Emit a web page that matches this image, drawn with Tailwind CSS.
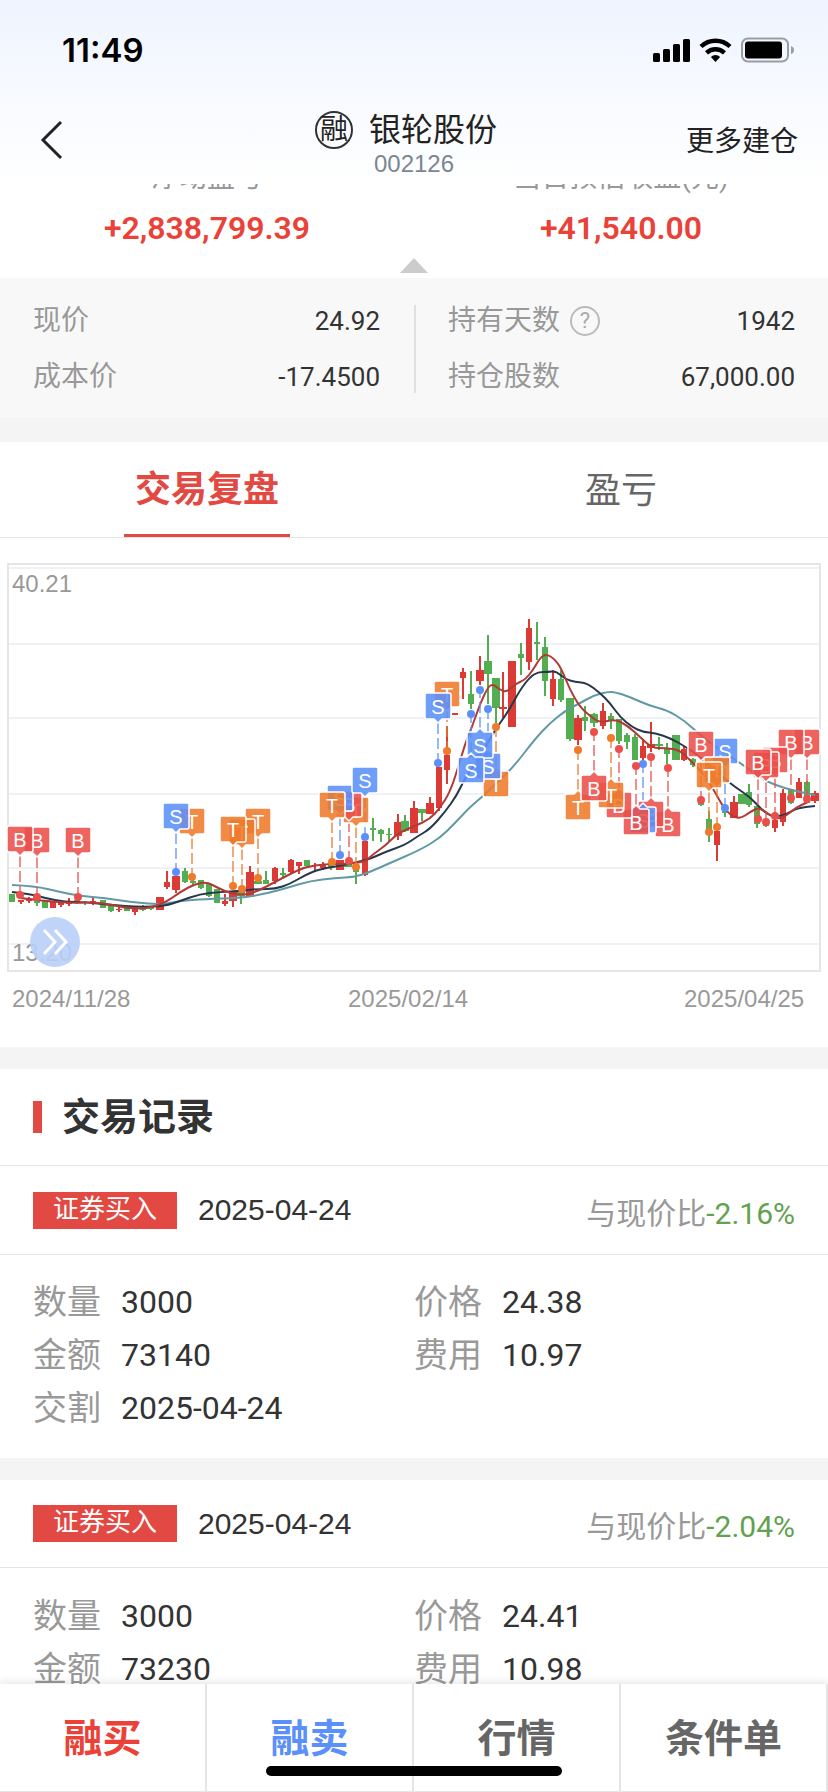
<!DOCTYPE html>
<html lang="zh-CN">
  <head>
    <meta charset="UTF-8">
    <meta name="viewport" content="width=device-width, initial-scale=1">
    <title>银轮股份 002126</title>
    <script src="https://cdn.jsdelivr.net/npm/@tailwindcss/browser@4"></script>
  </head>
  <body class="flex h-screen flex-col overflow-hidden bg-white font-[Roboto,'Noto_Sans_CJK_SC',sans-serif] text-[#333]">

    <header class="z-10 h-[184px] shrink-0 bg-linear-to-b from-[#eff4ff] to-white">
      <div class="flex h-[100px] items-center justify-between pr-[34px] pl-[62px]">
        <span class="font-[Inter,sans-serif] text-[33px] leading-8 font-semibold text-black">11:49</span>
        <svg class="h-[26px] w-[142px]" viewBox="0 0 142 26">
          <rect x="1" y="16" width="7" height="9" rx="1.5"/>
          <rect x="11" y="12" width="7" height="13" rx="1.5"/>
          <rect x="21" y="7" width="7" height="18" rx="1.5"/>
          <rect x="31" y="2" width="7" height="23" rx="1.5"/>
          <g fill="none" stroke="#000" stroke-width="4.4">
            <path d="M49 9.500A21 21 0 0 1 78 9.500"/>
            <path d="M54.500 15.800A13 13 0 0 1 72.500 15.800"/>
          </g>
          <path d="M63.500 25l-4.600-5a6.500 6.500 0 0 1 9.200 0z"/>
          <rect x="90" y="1.500" width="46" height="23" rx="6" fill="none" stroke="#9a9da3" stroke-width="2"/>
          <rect x="93" y="4.500" width="37" height="17" rx="3"/>
          <path d="M139 9q3 1 3 4t-3 4z" fill="#9a9da3"/>
        </svg>
      </div>
      <div class="grid grid-cols-[1fr_auto_1fr] items-center px-[30px]">
        <button class="flex h-20 w-12 items-center pl-[10px]" aria-label="返回">
          <svg class="h-10 w-[24px]" viewBox="0 0 24 40" fill="none" stroke="#222" stroke-width="3"><path d="M21 2L3 20l18 18"/></svg>
        </button>
        <div class="flex flex-col items-center pt-2">
          <h1 class="flex items-center gap-4 pr-4 text-[32px] leading-10 font-normal text-[#222]">
            <span class="flex size-[38px] items-center justify-center rounded-full border-2 border-[#333] text-[28px] leading-none">融</span>银轮股份
          </h1>
          <p class="font-['Liberation_Sans',sans-serif] text-2xl leading-7 text-[#7b8693]">002126</p>
        </div>
        <a href="#" class="justify-self-end pt-1 text-[28px] text-[#222]">更多建仓</a>
      </div>
    </header>

    <main class="min-h-0 flex-1 overflow-y-auto [scrollbar-width:none]">
      <section class="-mt-5 grid h-[114px] grid-cols-2 text-center">
        <div>
          <p class="text-[28px] leading-7 text-[#999]">浮动盈亏</p>
          <p class="mt-4 text-[32px] leading-10 font-semibold text-[#ea4238]">+2,838,799.39</p>
        </div>
        <div>
          <p class="text-[28px] leading-7 text-[#999]">当日预估收益(元)</p>
          <p class="mt-4 text-[32px] leading-10 font-semibold text-[#ea4238]">+41,540.00</p>
        </div>
        <svg class="col-span-2 mx-auto mt-1 h-[15px] w-7" viewBox="0 0 28 15" fill="#ccc"><path d="M14 0l14 15H0z"/></svg>
      </section>

      <section class="grid h-[140px] grid-cols-2 items-center bg-[#f8f8f8] pt-[2px] text-[28px] leading-14">
        <dl class="mr-[-2px] grid h-[88px] grid-cols-[auto_1fr] content-center border-r-2 border-[#e0e0e0] pr-[34px] pl-[33px]">
          <dt class="text-[#999]">现价</dt>
          <dd class="text-right text-[26px]">24.92</dd>
          <dt class="text-[#999]">成本价</dt>
          <dd class="text-right text-[26px]">-17.4500</dd>
        </dl>
        <dl class="grid h-[88px] grid-cols-[auto_1fr] content-center pr-[33px] pl-[34px]">
          <dt class="flex items-center gap-[10px] text-[#999]">持有天数
            <button class="flex size-[30px] items-center justify-center rounded-full border-2 border-[#bbb] text-[22px] leading-none text-[#aaa]" aria-label="说明">?</button>
          </dt>
          <dd class="text-right text-[26px]">1942</dd>
          <dt class="text-[#999]">持仓股数</dt>
          <dd class="text-right text-[26px]">67,000.00</dd>
        </dl>
      </section>

      <nav class="grid h-[120px] grid-cols-2 border-t-24 border-b border-t-[#f4f4f4] border-b-[#e5e5e5] text-[36px]">
        <button class="mx-auto w-[166px] border-b-3 border-[#e24943] pt-1 font-bold whitespace-nowrap text-[#e24943]">交易复盘</button>
        <button class="pt-[2px] text-[#666]">盈亏</button>
      </nav>

      <section class="relative">
        <svg id="chart" class="w-full" viewBox="0 538 828 509" font-family="'Liberation Sans', Arial, sans-serif"></svg>
        <button class="absolute top-[379px] left-[30px] flex size-[50px] items-center justify-center rounded-full bg-[#b9cffa]/90" aria-label="展开">
          <svg class="h-7 w-7" viewBox="0 0 28 28" fill="none" stroke="#fff" stroke-width="3"><path d="M3 2l11 12L3 26M14 2l11 12-11 12"/></svg>
        </button>
      </section>

      <h2 class="flex h-[119px] items-center gap-[20px] border-t-22 border-b border-t-[#f4f4f4] border-b-[#e5e5e5] px-[33px] text-[38px] font-bold">
        <span class="h-8 w-[9px] bg-[#e24943]"></span>交易记录
      </h2>

      <article>
        <div class="flex h-[89px] items-center border-b border-[#e5e5e5] px-[33px]">
          <span class="h-[37px] w-36 bg-[#e24943] text-center text-[26px] leading-[34px] text-white">证券买入</span>
          <time class="ml-[21px] font-['Liberation_Sans',sans-serif] text-[30px] leading-8">2025-04-24</time>
          <span class="ml-auto pt-[6px] text-[30px] text-[#999]">与现价比<b class="font-normal text-[#62a14f]">-2.16%</b></span>
        </div>
        <dl class="grid grid-cols-2 px-[33px] pt-[21px] pb-[23px] text-[32px] leading-[53px]">
          <div class="flex gap-5"><dt class="text-[34px] text-[#999]">数量</dt><dd>3000</dd></div>
          <div class="flex gap-5"><dt class="text-[34px] text-[#999]">价格</dt><dd>24.38</dd></div>
          <div class="flex gap-5"><dt class="text-[34px] text-[#999]">金额</dt><dd>73140</dd></div>
          <div class="flex gap-5"><dt class="text-[34px] text-[#999]">费用</dt><dd>10.97</dd></div>
          <div class="flex gap-5"><dt class="text-[34px] text-[#999]">交割</dt><dd>2025-04-24</dd></div>
        </dl>
      </article>

      <article class="border-t-22 border-[#f4f4f4]">
        <div class="flex h-[88px] items-center border-b border-[#e5e5e5] px-[33px]">
          <span class="h-[37px] w-36 bg-[#e24943] text-center text-[26px] leading-[34px] text-white">证券买入</span>
          <time class="ml-[21px] font-['Liberation_Sans',sans-serif] text-[30px] leading-8">2025-04-24</time>
          <span class="ml-auto pt-[6px] text-[30px] text-[#999]">与现价比<b class="font-normal text-[#62a14f]">-2.04%</b></span>
        </div>
        <dl class="grid grid-cols-2 px-[33px] pt-[22px] pb-[23px] text-[32px] leading-[53px]">
          <div class="flex gap-5"><dt class="text-[34px] text-[#999]">数量</dt><dd>3000</dd></div>
          <div class="flex gap-5"><dt class="text-[34px] text-[#999]">价格</dt><dd>24.41</dd></div>
          <div class="flex gap-5"><dt class="text-[34px] text-[#999]">金额</dt><dd>73230</dd></div>
          <div class="flex gap-5"><dt class="text-[34px] text-[#999]">费用</dt><dd>10.98</dd></div>
        </dl>
      </article>
    </main>

    <footer class="relative z-10 grid h-[108px] shrink-0 grid-cols-4 divide-x-2 divide-[#e5e5e5] border-b border-[#e5e5e5] bg-white text-[39px] font-bold text-[#666] shadow-[0_-2px_8px_rgba(0,0,0,0.1)]">
      <button class="pt-1 text-[#ea4238]">融买</button>
      <button class="pt-1 text-[#5b8ff9]">融卖</button>
      <button class="pt-1">行情</button>
      <button class="pt-1">条件单</button>
      <div class="absolute bottom-[15px] left-1/2 h-[10px] w-[296px] -translate-x-1/2 rounded-full bg-black"></div>
    </footer>

    <script>
      const RED = '#dc3b35';
      const GREEN = '#52ae50';

      // x, high, low, body top, body bottom, color, [body width]
      const candles = [
        [12,894,902,894,902,'g'], [21,900,904,900,902,'r'], [29,897,903,899,901,'r'], [37,901,906,901,903,'g'],
        [45,900,908,900,908,'g'], [53,902,908,902,908,'r'], [61,900,907,903,905,'r'], [69,898,906,902,904,'r'],
        [77,899,904,900,903,'g'], [85,901,905,902,903,'g'], [93,897,905,901,902,'r'], [103,900,908,900,908,'g'],
        [111,905,912,906,911,'g'], [119,906,912,909,910,'r'], [127,906,911,907,911,'g'], [135,906,915,906,912,'r'],
        [143,905,911,907,910,'g'], [151,906,910,907,909,'g'], [160,897,910,897,910,'r',8], [167,871,889,882,887,'r'],
        [176,876,893,876,890,'r',8], [185,868,883,871,882,'g'], [193,880,886,881,883,'g'], [201,880,889,880,888,'g'],
        [209,883,897,884,896,'g'], [217,889,903,889,903,'g'], [225,894,906,901,904,'r'], [233,891,907,891,901,'r',8],
        [241,892,904,892,896,'g',8], [250,866,897,872,897,'r',8], [258,876,884,881,884,'g',8], [266,871,884,880,884,'g'],
        [275,867,884,868,881,'r'], [283,868,877,873,875,'g'], [291,859,873,860,872,'r'], [299,862,874,862,866,'r'],
        [307,860,868,860,866,'g'], [315,863,871,865,866,'r'], [323,862,870,864,868,'r'], [331,862,870,865,868,'g'],
        [340,860,870,860,870,'r',8], [348,862,867,864,867,'g',8], [356,867,884,869,872,'g'], [365,841,876,841,875,'r'],
        [373,818,841,828,830,'g'], [381,829,842,830,834,'g'], [389,828,841,834,835,'g'], [398,814,840,822,836,'r',8],
        [405,815,832,821,831,'g',8], [414,801,833,808,833,'r',8], [422,809,821,809,813,'g',8], [430,797,814,803,814,'r',8],
        [439,767,811,767,808,'r'], [447,726,784,755,770,'r'], [455,713,715,713,715,'r'], [463,668,699,672,678,'r'],
        [471,671,709,694,704,'g'], [480,656,685,670,681,'r',8], [488,635,704,661,674,'g',8], [496,678,723,678,708,'g',8],
        [503,672,718,707,709,'r',8], [512,661,727,661,727,'r',8], [521,643,675,654,658,'g'], [529,619,670,628,662,'r'],
        [537,622,660,642,644,'g'], [545,637,696,647,681,'g'], [553,670,706,679,699,'r'], [561,670,702,679,700,'g'],
        [570,698,741,698,739,'g',8], [578,715,745,718,740,'r',8], [585,706,731,717,721,'g'], [594,713,727,714,723,'g',8],
        [603,703,729,711,726,'r'], [611,713,729,716,720,'g'], [619,719,744,719,741,'g'], [627,733,749,735,742,'g'],
        [635,734,760,737,760,'g'], [643,739,760,746,758,'r'], [651,722,752,744,748,'r',8], [659,737,750,744,746,'g',8],
        [667,743,764,749,754,'g'], [676,735,760,735,760,'g',8], [684,747,761,749,760,'r'], [693,758,767,759,765,'g'],
        [701,798,806,802,805,'g'], [709,811,842,819,833,'g'], [717,828,861,831,845,'r'], [725,806,817,810,813,'g'],
        [734,796,818,802,818,'r',8], [742,794,804,794,804,'g',8], [749,784,807,792,805,'g'], [757,806,828,806,824,'g'],
        [766,820,827,823,826,'g'], [775,818,832,820,828,'r'], [783,789,826,793,822,'r'], [791,789,804,789,803,'g'],
        [799,778,798,782,798,'r'], [807,781,803,782,803,'g'], [815,791,803,793,801,'r',8],
      ];

      const averages = [
        { color: '#629aa4', points: [[12,885],[35,886],[60,892],[80,896],[105,898],[130,902],[155,904],[165,904],[180,901],[205,899],[240,898],[265,894],[290,887],[310,881],[335,878],[355,877],[370,872],[390,863],[420,850],[440,838],[455,823],[470,807],[482,797],[500,780],[515,765],[535,739],[550,723],[565,711],[580,703],[595,695],[607,692],[615,692],[630,697],[650,706],[667,710],[685,721],[700,735],[720,750],[742,764],[760,778],[775,785],[795,791],[815,795]] },
        { color: '#28384c', points: [[12,892],[30,894],[45,898],[65,902],[85,902],[110,905],[140,907],[165,906],[180,901],[200,894],[220,892],[240,891],[258,889],[275,889],[290,884],[305,875],[320,869],[345,865],[370,859],[385,852],[405,845],[418,836],[430,829],[445,812],[457,795],[465,778],[480,757],[495,730],[508,712],[520,690],[530,677],[538,672],[548,672],[556,671],[565,679],[575,682],[587,683],[600,693],[610,703],[620,717],[632,727],[643,732],[655,733],[670,738],[686,747],[700,757],[720,775],[735,787],[750,797],[762,810],[772,817],[785,815],[797,808],[815,806]] },
        { color: '#b23a36', points: [[20,898],[45,901],[70,903],[100,902],[125,908],[145,909],[165,903],[180,892],[195,884],[207,882],[218,888],[232,894],[245,895],[258,891],[275,882],[290,874],[305,867],[325,864],[345,864],[365,862],[372,855],[385,846],[398,833],[415,826],[430,819],[440,808],[450,792],[458,768],[465,744],[472,727],[480,704],[488,687],[493,684],[500,690],[507,692],[515,684],[525,680],[533,670],[540,658],[546,654],[555,659],[562,670],[570,690],[580,707],[590,716],[600,723],[615,719],[628,726],[640,737],[652,748],[665,748],[680,750],[692,762],[705,776],[715,792],[722,805],[730,815],[740,819],[750,812],[758,808],[765,811],[775,819],[785,817],[795,808],[808,802]] },
      ];

      // B = buy, S = sell, T = both on one day: type, x, flag center y, dot y
      const marks = [
        ['B',78,840,897], ['B',37,840,897], ['B',20,839,895], ['T',192,821,877], ['S',176,816,872],
        ['T',258,821,878], ['T',242,832,889], ['T',233,829,886],
        ['T',356,810,867], ['B',349,804,861], ['S',340,798,855], ['T',332,805,862], ['S',365,780,837],
        ['T',447,694,751], ['S',438,706,763], ['T',496,784,727], ['S',488,766,709], ['S',480,745,690], ['S',471,770,714],
        ['B',668,824,768], ['B',651,814,757], ['S',643,820,764], ['B',636,822,766],
        ['B',619,805,749], ['T',611,795,738], ['T',578,807,750], ['B',594,788,732],
        ['B',807,742,799], ['B',791,742,798], ['B',775,760,816], ['B',766,765,822], ['B',758,762,819],
        ['S',725,751,808], ['T',717,770,827], ['T',709,775,832], ['B',701,744,800],
      ];
      const markColors = { B: '#ea4f4b', S: '#5b8ff9', T: '#ee7a2b' };

      let svg = '';
      for (const y of [568, 644, 718, 794, 868, 944]) {
        svg += `<path d="M8 ${y}H820" stroke="#f0f0f5" stroke-width="2"/>`;
      }
      svg += '<rect x="8" y="564" width="812" height="407" fill="none" stroke="#e5e5e8" stroke-width="2"/>';

      for (const [x, high, low, top, bottom, color, width = 6] of candles) {
        const fill = color === 'r' ? RED : GREEN;
        svg += `<rect x="${x - 1}" y="${high}" width="2" height="${low - high}" fill="${fill}"/>`;
        svg += `<rect x="${x - width / 2}" y="${top}" width="${width}" height="${bottom - top}" fill="${fill}"/>`;
      }
      for (const { color, points } of averages) {
        svg += `<path d="${smooth(points)}" fill="none" stroke="${color}" stroke-width="2"/>`;
      }
      for (const [type, x, y, dot] of marks) {
        const color = markColors[type];
        const dir = dot > y ? 1 : -1;
        svg += `<path d="M${x} ${y + dir * 17}V${dot}" stroke="${color}" stroke-width="1.7" stroke-dasharray="11 4" opacity=".75"/>`;
        svg += `<circle cx="${x}" cy="${dot}" r="4" fill="${color}"/>`;
      }
      for (const [type, x, y, dot] of marks) {
        svg += flag(x, y, dot > y, markColors[type]);
        svg += `<text x="${x}" y="${y + 8}" font-size="20" fill="#fff" text-anchor="middle">${type}</text>`;
      }

      const labels = [[12, 592, '40.21'], [12, 961, '13.20'], [12, 1007, '2024/11/28'], [348, 1007, '2025/02/14'], [684, 1007, '2025/04/25']];
      for (const [x, y, text] of labels) {
        svg += `<text x="${x}" y="${y}" font-size="24" fill="#999">${text}</text>`;
      }
      document.getElementById('chart').innerHTML = svg;

      // quadratic curve through the middle of each pair of points
      function smooth(points) {
        let d = `M${points[0]}`;
        for (let i = 1; i < points.length - 1; i++) {
          const [x, y] = points[i];
          const [nx, ny] = points[i + 1];
          d += `Q${x} ${y} ${(x + nx) / 2} ${(y + ny) / 2}`;
        }
        return d + `L${points[points.length - 1]}`;
      }

      function flag(x, y, down, color) {
        const d = down
          ? `M${x - 11} ${y - 13}h22q2 0 2 2v22q0 2-2 2h-7l-4 4-4-4h-7q-2 0-2-2v-22q0-2 2-2z`
          : `M${x - 11} ${y + 13}h22q2 0 2-2v-22q0-2-2-2h-7l-4-4-4 4h-7q-2 0-2 2v22q0 2 2 2z`;
        return `<path d="${d}" fill="${color}" fill-opacity=".88" stroke="#fff" stroke-width="1.5" stroke-linejoin="round"/>`;
      }
    </script>
  </body>
</html>
